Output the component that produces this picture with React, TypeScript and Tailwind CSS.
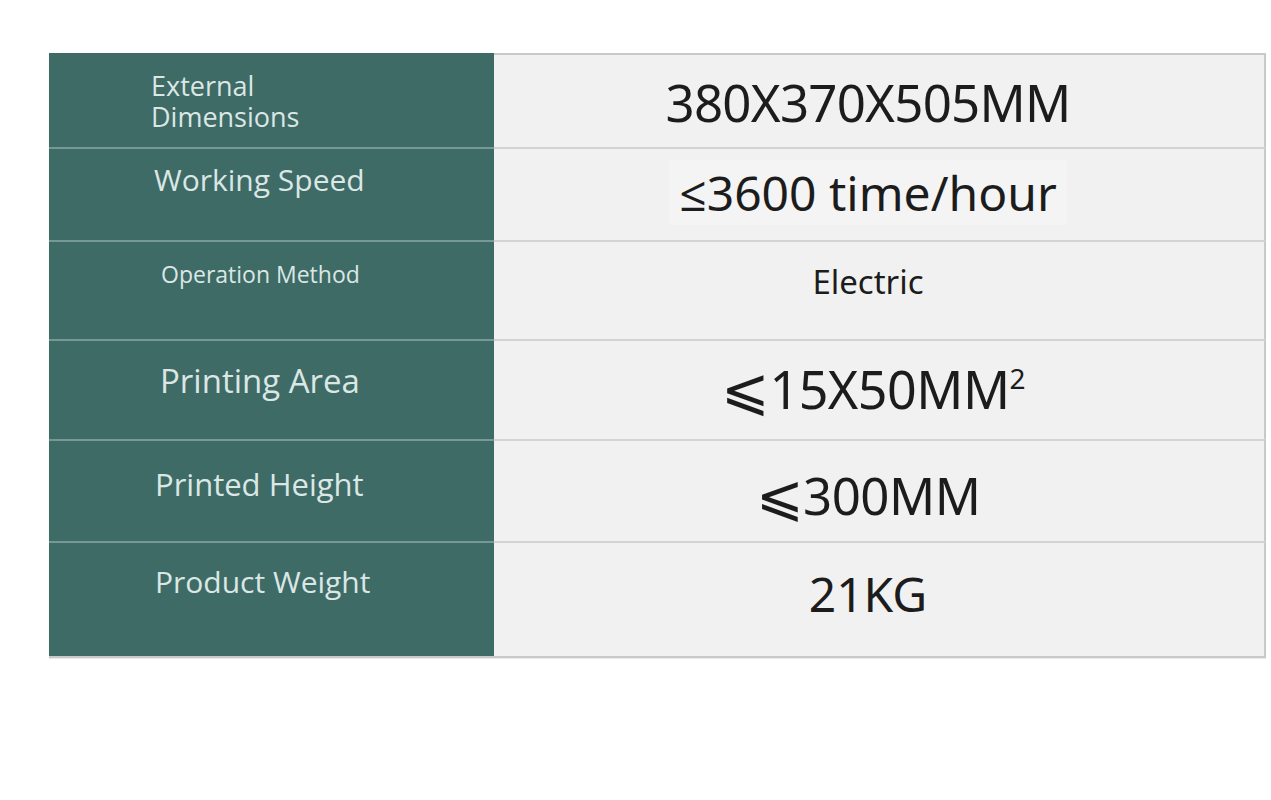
import React from "react";

type Row = {
  h: string;
  label: React.ReactNode;
  lcls: string;
  value: React.ReactNode;
  rcls: string;
  first?: boolean;
};

const rows: Row[] = [
  {
    h: "h-[94px]",
    label: (
      <div className="text-[27px] leading-[31px]">
        <div>External</div>
        <div>Dimensions</div>
      </div>
    ),
    lcls: "pt-[17px] pl-[102px]",
    value: <span className="text-[51px] leading-none tracking-[-0.015em]">380X370X505MM</span>,
    rcls: "pt-[22px]",
    first: true,
  },
  {
    h: "h-[93px]",
    label: <div className="text-[30px] leading-none">Working Speed</div>,
    lcls: "pt-[16px] pl-[105px]",
    value: (
      <span className="text-[48px] leading-none bg-[#f4f4f4] px-[10px]">≤3600 time/hour</span>
    ),
    rcls: "pt-[20px]",
  },
  {
    h: "h-[99px]",
    label: <div className="text-[23px] leading-none">Operation Method</div>,
    lcls: "pt-[21px] pl-[112px]",
    value: <span className="text-[33px] leading-none">Electric</span>,
    rcls: "pt-[23px] pr-[8px]",
  },
  {
    h: "h-[100px]",
    label: <div className="text-[33px] leading-none">Printing Area</div>,
    lcls: "pt-[23px] pl-[111px]",
    value: (
      <span className="text-[52px] leading-none tracking-[-0.01em]">
        <span className="text-[58px]">⩽</span>15X50MM<sup className="text-[28px] relative top-[-20px] align-baseline">2</sup>
      </span>
    ),
    rcls: "pt-[17px] pl-[10px]",
  },
  {
    h: "h-[102px]",
    label: <div className="text-[31px] leading-none">Printed Height</div>,
    lcls: "pt-[28px] pl-[106px]",
    value: (
      <span className="text-[51px] leading-none tracking-[-0.01em]">
        <span className="text-[57px]">⩽</span>300MM
      </span>
    ),
    rcls: "pt-[24px]",
  },
  {
    h: "h-[115px]",
    label: <div className="text-[30px] leading-none">Product Weight</div>,
    lcls: "pt-[24px] pl-[106px]",
    value: <span className="text-[48px] leading-none">21KG</span>,
    rcls: "pt-[27px]",
  },
];

export default function App() {
  return (
    <div className="w-[1271px] h-[800px] bg-white pt-[53px] pl-[49px]">
      <div className="w-[1217px] flex flex-col border-b-2 border-[#c9c9c9] shadow-[0_1px_1px_rgba(0,0,0,0.08)]">
        {rows.map((r, i) => (
          <div key={i} className={`flex ${r.h}`}>
            <div
              className={`w-[445px] shrink-0 bg-[#3e6b66] text-[#dbe7e4] ${
                r.first ? "" : "border-t-2 border-[#769993]"
              } ${r.lcls}`}
              style={{ fontFamily: '"Open Sans", "Noto Sans", sans-serif' }}
            >
              {r.label}
            </div>
            <div
              className={`flex-1 bg-[#f1f1f1] text-[#1c1c1c] border-r-2 border-[#c9c9c9] flex justify-center pr-[22px] ${
                r.first ? "border-t-2" : "border-t-2 border-t-[#d3d3d3]"
              } ${r.rcls}`}
              style={{ fontFamily: '"Noto Sans", "Open Sans", sans-serif' }}
            >
              <div>{r.value}</div>
            </div>
          </div>
        ))}
      </div>
    </div>
  );
}
